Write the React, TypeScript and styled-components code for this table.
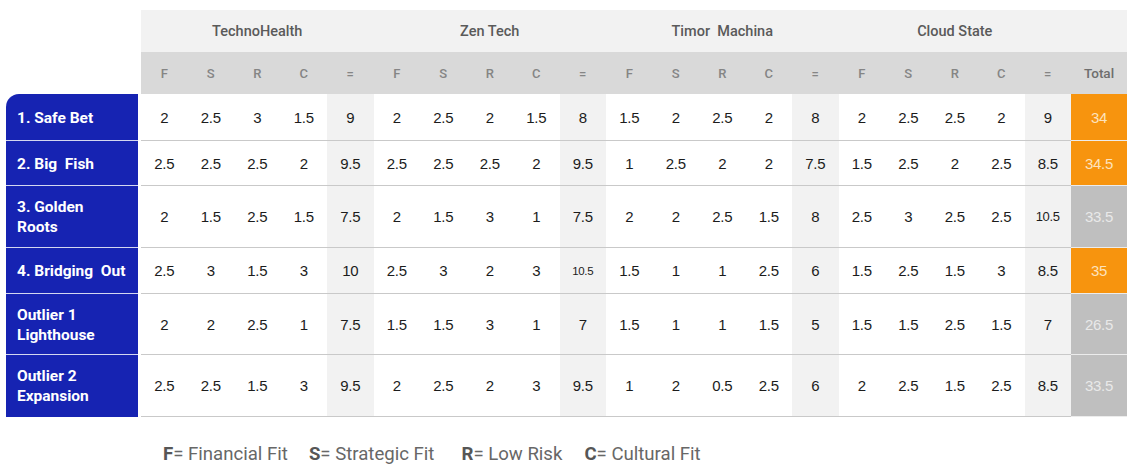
import React from "react";
import styled, { createGlobalStyle } from "styled-components";

const GlobalStyle = createGlobalStyle`
  html, body { margin: 0; padding: 0; background: #ffffff; }
  body { font-family: "Liberation Sans", Arial, sans-serif; }
`;

const Page = styled.div`
  padding: 10px 0 0 6px;
  width: 1139px;
  height: 465px;
  box-sizing: border-box;
`;

const Grid = styled.div`
  display: grid;
  width: 1121px;
  grid-template-columns: 135px repeat(20, 1fr) 56px;
  grid-template-rows: 42px 42px 47px 45px 62px 46px 61px 62px;
`;

const Corner = styled.div`
  grid-row: 1 / span 2;
  grid-column: 1;
`;

const CompanyCell = styled.div<{ $span: number }>`
  grid-column: span ${(p) => p.$span};
  background: #f2f2f2;
  display: flex;
  align-items: center;
  justify-content: center;
  font-family: Roboto, "Liberation Sans", sans-serif;
  font-weight: 500;
  font-size: 14.5px;
  color: #5a5a5a;
  white-space: pre;
`;

const SubHeadCell = styled.div<{ $total?: boolean }>`
  background: #d9d9d9;
  display: flex;
  align-items: center;
  justify-content: center;
  font-family: Roboto, "Liberation Sans", sans-serif;
  font-weight: 500;
  font-size: ${(p) => (p.$total ? "13.5px" : "13px")};
  color: ${(p) => (p.$total ? "#6e6e6e" : "#858585")};
`;

const LabelCell = styled.div<{ $first?: boolean; $last?: boolean }>`
  margin-right: 3px;
  background: #1623b2;
  border-bottom: 1px solid ${(p) => (p.$last ? "#1623b2" : "#d4d7f0")};
  border-top-left-radius: ${(p) => (p.$first ? "13px" : "0")};
  display: flex;
  align-items: center;
  padding-left: 11px;
  padding-top: 1px;
  font-family: Roboto, "Liberation Sans", sans-serif;
  font-weight: 700;
  font-size: 15.5px;
  line-height: 20px;
  color: #ffffff;
  white-space: pre-wrap;
`;

type Kind = "plain" | "sum" | "orange" | "grey";

const ValueCell = styled.div<{ $kind: Kind; $size?: number }>`
  display: flex;
  align-items: center;
  justify-content: center;
  font-family: "Liberation Sans", Arial, sans-serif;
  font-size: ${(p) => p.$size ?? 15}px;
  letter-spacing: -0.3px;
  border-bottom: 1px solid
    ${(p) =>
      p.$kind === "orange" || p.$kind === "grey" ? "#ececec" : "#c9c9c9"};
  background: ${(p) =>
    p.$kind === "sum"
      ? "#f2f2f2"
      : p.$kind === "orange"
      ? "#f7940e"
      : p.$kind === "grey"
      ? "#bfbfbf"
      : "#ffffff"};
  color: ${(p) =>
    p.$kind === "orange"
      ? "#fde2bd"
      : p.$kind === "grey"
      ? "#e9e9e9"
      : "#1c1c1c"};
`;

const Legend = styled.div`
  display: flex;
  align-items: center;
  margin-top: 26px;
  margin-left: 157px;
  font-family: Roboto, "Liberation Sans", sans-serif;
  font-size: 18.6px;
  line-height: 22px;
  color: #676767;
`;

const LegendItem = styled.span<{ $gap: number }>`
  margin-right: ${(p) => p.$gap}px;
  white-space: pre;
`;

const Key = styled.b`
  font-weight: 700;
  color: #565656;
`;

const companies = ["TechnoHealth", "Zen Tech", "Timor  Machina", "Cloud State"];
const subHeads = ["F", "S", "R", "C", "="];

type Row = {
  label: string;
  values: string[][];
  total: string;
  highlight: boolean;
  small?: Record<number, number>;
};

const rows: Row[] = [
  {
    label: "1. Safe Bet",
    values: [
      ["2", "2.5", "3", "1.5", "9"],
      ["2", "2.5", "2", "1.5", "8"],
      ["1.5", "2", "2.5", "2", "8"],
      ["2", "2.5", "2.5", "2", "9"],
    ],
    total: "34",
    highlight: true,
  },
  {
    label: "2. Big  Fish",
    values: [
      ["2.5", "2.5", "2.5", "2", "9.5"],
      ["2.5", "2.5", "2.5", "2", "9.5"],
      ["1", "2.5", "2", "2", "7.5"],
      ["1.5", "2.5", "2", "2.5", "8.5"],
    ],
    total: "34.5",
    highlight: true,
  },
  {
    label: "3. Golden\nRoots",
    values: [
      ["2", "1.5", "2.5", "1.5", "7.5"],
      ["2", "1.5", "3", "1", "7.5"],
      ["2", "2", "2.5", "1.5", "8"],
      ["2.5", "3", "2.5", "2.5", "10.5"],
    ],
    total: "33.5",
    highlight: false,
    small: { 19: 13 },
  },
  {
    label: "4. Bridging  Out",
    values: [
      ["2.5", "3", "1.5", "3", "10"],
      ["2.5", "3", "2", "3", "10.5"],
      ["1.5", "1", "1", "2.5", "6"],
      ["1.5", "2.5", "1.5", "3", "8.5"],
    ],
    total: "35",
    highlight: true,
    small: { 9: 11.5 },
  },
  {
    label: "Outlier 1\nLighthouse",
    values: [
      ["2", "2", "2.5", "1", "7.5"],
      ["1.5", "1.5", "3", "1", "7"],
      ["1.5", "1", "1", "1.5", "5"],
      ["1.5", "1.5", "2.5", "1.5", "7"],
    ],
    total: "26.5",
    highlight: false,
  },
  {
    label: "Outlier 2\nExpansion",
    values: [
      ["2.5", "2.5", "1.5", "3", "9.5"],
      ["2", "2.5", "2", "3", "9.5"],
      ["1", "2", "0.5", "2.5", "6"],
      ["2", "2.5", "1.5", "2.5", "8.5"],
    ],
    total: "33.5",
    highlight: false,
  },
];

const legend = [
  { key: "F", text: "= Financial Fit", gap: 21 },
  { key: "S", text: "= Strategic Fit", gap: 27 },
  { key: "R", text: "= Low Risk", gap: 22 },
  { key: "C", text: "= Cultural Fit", gap: 0 },
];

export default function App() {
  return (
    <>
      <GlobalStyle />
      <Page>
        <Grid>
          <Corner />
          {companies.map((c) => (
            <CompanyCell key={c} $span={5}>
              {c}
            </CompanyCell>
          ))}
          <CompanyCell $span={1} />
          {companies.map((c) =>
            subHeads.map((s) => <SubHeadCell key={c + s}>{s}</SubHeadCell>)
          )}
          <SubHeadCell $total>Total</SubHeadCell>

          {rows.map((r, ri) => (
            <React.Fragment key={r.label}>
              <LabelCell $first={ri === 0} $last={ri === rows.length - 1}>
                {r.label}
              </LabelCell>
              {r.values.flat().map((v, i) => (
                <ValueCell
                  key={i}
                  $kind={i % 5 === 4 ? "sum" : "plain"}
                  $size={r.small?.[i]}
                >
                  {v}
                </ValueCell>
              ))}
              <ValueCell $kind={r.highlight ? "orange" : "grey"}>
                {r.total}
              </ValueCell>
            </React.Fragment>
          ))}
        </Grid>
        <Legend>
          {legend.map((l) => (
            <LegendItem key={l.key} $gap={l.gap}>
              <Key>{l.key}</Key>
              {l.text}
            </LegendItem>
          ))}
        </Legend>
      </Page>
    </>
  );
}
